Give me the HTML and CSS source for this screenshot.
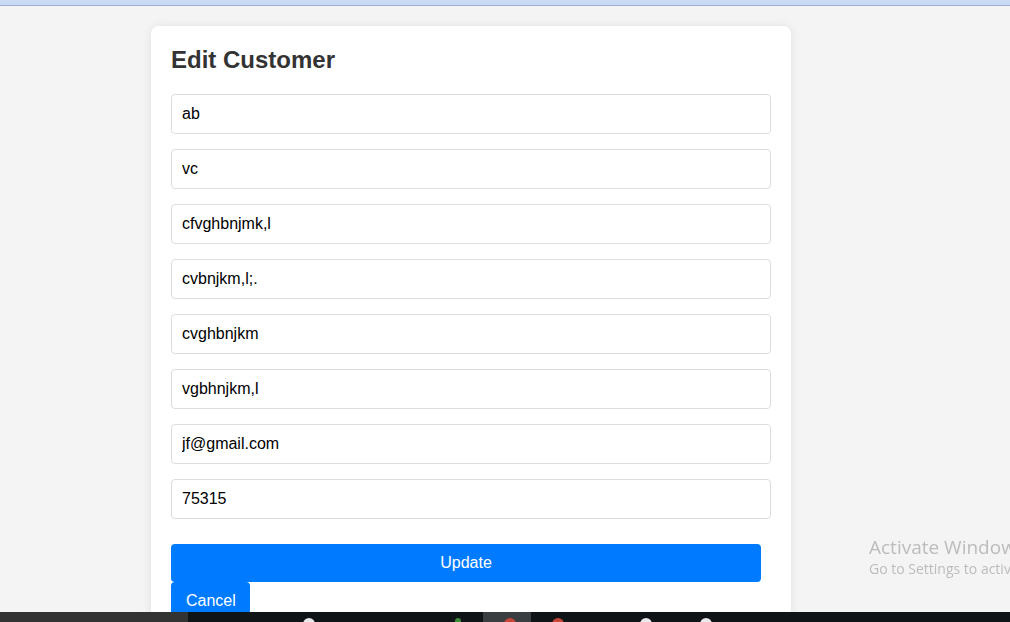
FILE: index.html
```html
<!DOCTYPE html>
<html lang="en">
<head>
<meta charset="utf-8">
<title>Edit Customer</title>
<link rel="stylesheet" href="styles.css">
</head>
<body>
<div class="topbar"></div>
<main class="card">
  <h2 class="title">Edit Customer</h2>
  <form class="form">
    <input class="field" type="text" value="ab">
    <input class="field" type="text" value="vc">
    <input class="field" type="text" value="cfvghbnjmk,l">
    <input class="field" type="text" value="cvbnjkm,l;.">
    <input class="field" type="text" value="cvghbnjkm">
    <input class="field" type="text" value="vgbhnjkm,l">
    <input class="field" type="text" value="jf@gmail.com">
    <input class="field" type="text" value="75315">
    <button class="btn btn-update" type="button">Update</button>
    <button class="btn btn-cancel" type="button">Cancel</button>
  </form>
</main>
<div class="activate">
  <div class="activate-title">Activate Windows</div>
  <div class="activate-sub">Go to Settings to activate Windows.</div>
</div>
<div class="taskbar">
  <div class="tb-left"></div>
  <div class="tb-main">
    <span class="tb-icon tb-white" style="left:115px"></span>
    <span class="tb-icon tb-green" style="left:267px"></span>
    <span class="tb-active" style="left:295px"></span>
    <span class="tb-icon tb-red" style="left:316px"></span>
    <span class="tb-icon tb-red" style="left:364px"></span>
    <span class="tb-icon tb-white" style="left:452px"></span>
    <span class="tb-icon tb-white" style="left:512px"></span>
  </div>
</div>
</body>
</html>
```
FILE: styles.css
```css
* { box-sizing: border-box; }

html, body {
  margin: 0;
  padding: 0;
  height: 100%;
  overflow: hidden;
}

body {
  background: #f4f4f4;
  font-family: "Liberation Sans", Arial, sans-serif;
  color: #000;
}

.topbar {
  height: 6px;
  background: #c9dbf5;
  border-bottom: 1px solid #a3adcb;
}

.card {
  width: 640px;
  margin: 20px 0 0 151px;
  padding: 20px;
  background: #fff;
  border-radius: 8px;
  box-shadow: 0 0 10px rgba(0, 0, 0, 0.08);
}

.title {
  margin: 0 0 20px;
  font-size: 24px;
  font-weight: bold;
  color: #333;
  line-height: 27.6px;
}

.form {
  display: flex;
  flex-direction: column;
  align-items: flex-start;
}

.field {
  display: block;
  width: 600px;
  height: 40px;
  margin: 0 0 15px;
  padding: 10px;
  border: 1px solid #dddddd;
  border-radius: 4px;
  font-family: "Liberation Sans", Arial, sans-serif;
  font-size: 16px;
  color: #000;
  background: #fff;
  outline: none;
}

.btn {
  height: 38px;
  padding: 10px 15px;
  border: none;
  border-radius: 4px;
  background: #007bff;
  color: #fff;
  font-family: "Liberation Sans", Arial, sans-serif;
  font-size: 16px;
  line-height: 18px;
  cursor: pointer;
}

.btn-update {
  width: 590px;
  margin-top: 10px;
}

.btn-cancel {
  width: 79px;
}

.activate {
  position: fixed;
  left: 869px;
  top: 535px;
  white-space: nowrap;
  font-family: "Open Sans", "Noto Sans", sans-serif;
  color: #bcbcbc;
}

.activate-title {
  font-size: 19px;
  line-height: 24px;
}

.activate-sub {
  font-size: 14px;
  line-height: 20px;
}

.taskbar {
  position: fixed;
  left: 0;
  right: 0;
  bottom: 0;
  height: 10px;
  display: flex;
}

.tb-left {
  width: 188px;
  background: #333333;
}

.tb-main {
  position: relative;
  flex: 1;
  background: #0f1417;
}

.tb-active {
  position: absolute;
  top: 0;
  width: 48px;
  height: 10px;
  background: #3b3e41;
}

.tb-icon {
  position: absolute;
  top: 6px;
  width: 12px;
  height: 6px;
  border-radius: 6px 6px 0 0;
  z-index: 1;
}

.tb-white { background: #e8e8e8; }
.tb-green { background: #3d8a3a; width: 6px; }
.tb-red { background: #c8453a; }
```
